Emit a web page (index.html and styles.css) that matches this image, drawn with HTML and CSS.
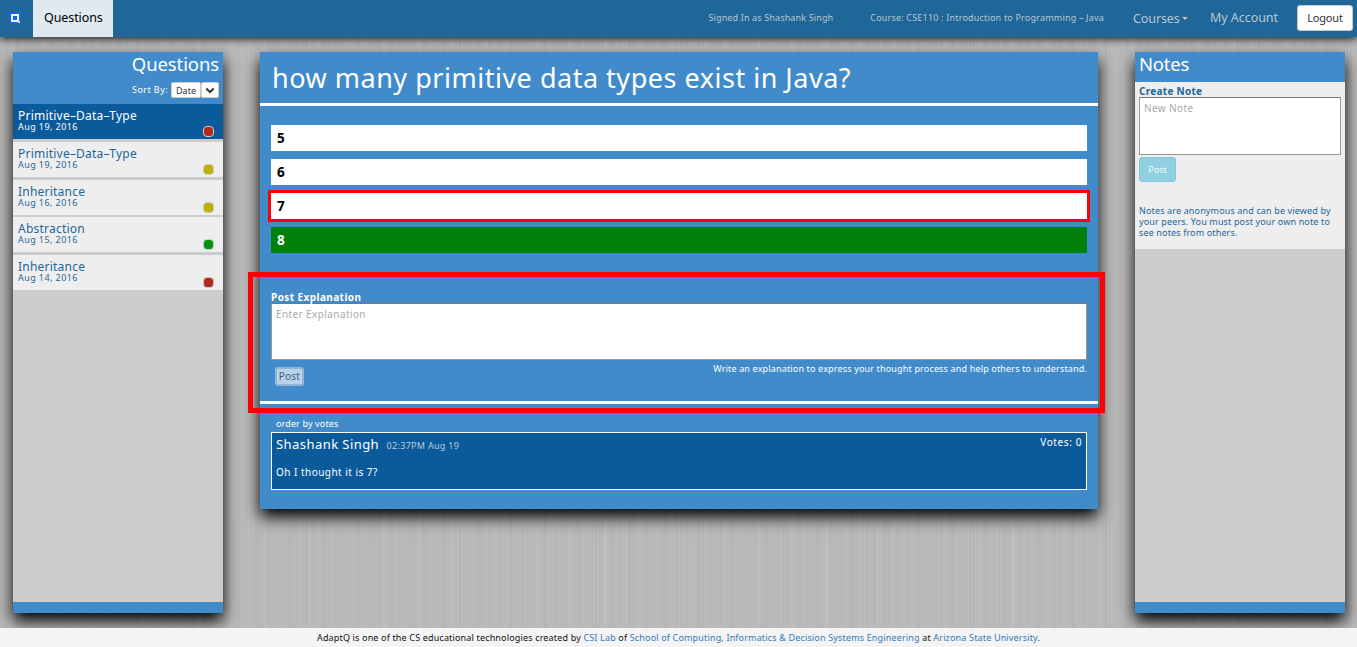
FILE: index.html
```
<!DOCTYPE html>
<html lang="en">
<head>
<meta charset="utf-8">
<title>AdaptQ</title>
<link rel="stylesheet" href="styles.css">
</head>
<body>
<nav class="navbar">
  <a class="brand"><svg width="12" height="12" viewBox="0 0 12 12"><rect width="12" height="12" fill="#1763ee"/><rect x="3" y="3" width="6" height="6" fill="none" stroke="#fff" stroke-width="1.900"/><rect x="9" y="9" width="2" height="2" fill="#cfe0ff"/></svg></a>
  <a class="tab">Questions</a>
  <div class="nav-right">
    <span class="signed">Signed In as Shashank Singh</span>
    <span class="course">Course: CSE110 : Introduction to Programming – Java</span>
    <span class="courses">Courses<i class="caret"></i></span>
    <span class="account">My Account</span>
    <button class="logout">Logout</button>
  </div>
</nav>
<main class="page">
  <aside class="panel side">
    <header class="side-head">
      <h2>Questions</h2>
      <div class="sort"><span class="sort-label">Sort By:</span><span class="select"><b>Date</b><b class="arrow"><svg width="10" height="7" viewBox="0 0 10 7"><path d="M1.300 1.500 5 5l3.700-3.500" fill="none" stroke="#333" stroke-width="2"/></svg></b></span></div>
    </header>
    <ul class="list">
      <li class="active"><span class="name">Primitive–Data–Type</span><span class="date">Aug 19, 2016</span><i class="dot red"></i></li>
      <li><span class="name">Primitive–Data–Type</span><span class="date">Aug 19, 2016</span><i class="dot yellow"></i></li>
      <li><span class="name">Inheritance</span><span class="date">Aug 16, 2016</span><i class="dot yellow"></i></li>
      <li><span class="name">Abstraction</span><span class="date">Aug 15, 2016</span><i class="dot green"></i></li>
      <li><span class="name">Inheritance</span><span class="date">Aug 14, 2016</span><i class="dot red"></i></li>
    </ul>
    <div class="side-foot"></div>
  </aside>
  <section class="panel main">
    <h1>how many primitive data types exist in Java?</h1>
    <ol class="answers">
      <li>5</li>
      <li>6</li>
      <li class="chosen">7</li>
      <li class="correct">8</li>
    </ol>
    <div class="explain">
      <label>Post Explanation</label>
      <div class="field">Enter Explanation</div>
      <div class="explain-row"><button class="post">Post</button><span class="hint">Write an explanation to express your thought process and help others to understand.</span></div>
      <div class="marker"></div>
    </div>
    <div class="comments">
      <span class="order">order by votes</span>
      <article class="comment">
        <div class="comment-head"><span class="author">Shashank Singh</span><span class="time">02:37PM Aug 19</span><span class="votes">Votes: 0</span></div>
        <p>Oh I thought it is 7?</p>
      </article>
    </div>
  </section>
  <aside class="panel side">
    <h2 class="notes-head">Notes</h2>
    <div class="notes">
      <label>Create Note</label>
      <div class="field">New Note</div>
      <button class="note-post">Post</button>
      <p>Notes are anonymous and can be viewed by<br>your peers. You must post your own note to<br>see notes from others.</p>
    </div>
    <div class="side-foot"></div>
  </aside>
</main>
<footer class="footer">AdaptQ is one of the CS educational technologies created by <a>CSI Lab</a> of <a>School of Computing, Informatics &amp; Decision Systems Engineering</a> at <a>Arizona State University</a>.</footer>
</body>
</html>
```
FILE: styles.css
```
* { box-sizing: border-box; }
body {
  margin: 0;
  width: 1357px;
  height: 647px;
  overflow: hidden;
  display: flex;
  flex-direction: column;
  font-family: "Noto Sans", sans-serif;
  font-size: 10px;
  color: #fff;
  background-color: #b9b9b9;
  background-image:
    repeating-linear-gradient(90deg, rgba(255,255,255,.045) 0 1px, transparent 1px 5px, rgba(0,0,0,.02) 5px 6px, transparent 6px 11px),
    repeating-linear-gradient(90deg, rgba(0,0,0,.015) 0 2px, transparent 2px 9px, rgba(255,255,255,.03) 9px 12px, transparent 12px 17px),
    repeating-linear-gradient(90deg, rgba(0,0,0,.02) 0 1px, transparent 1px 13px, rgba(255,255,255,.07) 13px 14px, transparent 14px 37px);
}
h1, h2, ul, ol, p { margin: 0; padding: 0; font-weight: 400; list-style: none; }
span { white-space: nowrap; }
button { font-family: inherit; padding: 0; }

.navbar {
  flex: none;
  height: 37px;
  display: flex;
  background: #1f6699;
  box-shadow: 0 2px 8px rgba(0,0,0,.85);
}
.brand { width: 33px; padding: 12px 0 0 9px; line-height: 0; }
.tab { width: 80px; background: #dfe9ef; color: #000; font-size: 12.5px; line-height: 35px; padding-left: 11px; letter-spacing: -.1px; }
.nav-right { margin-left: auto; display: flex; color: #b9c6d0; line-height: 35px; padding-right: 4px; }
.signed, .course { font-size: 9px; }
.signed { margin-right: 37px; letter-spacing: .14px; }
.course { margin-right: 29px; letter-spacing: .19px; }
.courses, .account { font-size: 12.5px; }
.courses { display: flex; align-items: center; width: 55px; margin-right: 22px; letter-spacing: -.1px; }
.caret { border: 3px solid transparent; border-top-color: #b9c6d0; border-bottom: 0; margin-left: 2px; }
.account { margin-right: 19px; letter-spacing: -.05px; }
.logout { width: 56px; height: 26px; margin-top: 5px; background: #fff; border: 1px solid #ccc; border-radius: 3px; color: #333; font-size: 11px; line-height: 24px; letter-spacing: -.2px; }

.page { flex: 1; display: flex; justify-content: space-between; align-items: flex-start; padding: 15px 12px 0 13px; }
.panel { box-shadow: 0 8px 15px #000; }
.side { width: 210px; height: 561px; background: #ccc; display: flex; flex-direction: column; }
.side-foot { height: 11px; background: #428bca; margin-top: auto; }
.side-head { height: 52px; background: #428bca; padding-right: 4px; display: flex; flex-direction: column; align-items: flex-end; }
.side h2 { font-size: 18.5px; line-height: 24px; letter-spacing: -.1px; }
.sort { display: flex; margin-top: 6px; line-height: 16px; font-size: 9px; }
.sort-label { margin-right: 3px; letter-spacing: .43px; }
.select { display: flex; }
.select b { height: 16px; width: 30px; background: #fff; border: 1px solid #ccc; border-radius: 2px; color: #333; font-weight: 400; text-align: center; line-height: 15px; }
.select .arrow { width: 18px; }
.list { color: #1f6699; }
.list li { height: 35px; margin-bottom: 2.75px; background: #eee; padding: 5px; display: flex; flex-direction: column; align-items: flex-start; position: relative; }
.list .active { background: #0b5a9c; color: #fff; }
.name { font-size: 12px; line-height: 13px; letter-spacing: .22px; }
.date { font-size: 9px; line-height: 10px; letter-spacing: .42px; }
.dot { position: absolute; right: 9px; bottom: 2px; width: 11px; height: 11px; border-radius: 4px; border: 1px solid #ccc; }
.red { background: #b2281c; }
.yellow { background: #bdb000; }
.green { background: #00940e; }

.main { width: 838px; height: 457px; background: #428bca; }
h1 { height: 54px; border-bottom: 3px solid #fff; padding-left: 12px; font-size: 27px; line-height: 51px; letter-spacing: .51px; }
.answers { padding: 19px 11px; display: flex; flex-direction: column; gap: 8px; height: 166px; }
.answers li { height: 26px; background: #fff; color: #000; font-weight: 700; font-size: 13.5px; line-height: 26px; padding-left: 6px; }
.answers .chosen { box-shadow: 0 0 0 3px red; }
.answers .correct { background: #008009; color: #fff; }
.explain { height: 132px; border-bottom: 3px solid #fff; padding: 18px 11px 0; position: relative; }
.explain label, .notes label { display: block; height: 13px; line-height: 14px; font-size: 10px; font-weight: 700; letter-spacing: .42px; }
.field { background: #fff; border: 1px solid #999; border-top-color: #777; color: #aaa; font-size: 10px; line-height: 20px; padding-left: 4px; letter-spacing: .4px; }
.explain .field { height: 57px; }
.explain-row { display: flex; justify-content: space-between; }
.post { width: 29px; height: 19px; margin: 7px 0 0 4px; background: #b9d3ea; border: 2px solid #93b5d5; border-radius: 3px; color: #3f5e7a; font-size: 10px; line-height: 15px; letter-spacing: .2px; }
.hint { font-size: 9px; line-height: 18px; letter-spacing: .16px; }
.marker { position: absolute; left: -12px; top: 0; width: 857px; height: 141px; border: 5px solid red; }
.comments { padding: 12px 11px; }
.order { display: block; width: max-content; margin-left: 5px; font-size: 9px; line-height: 16px; letter-spacing: .13px; }
.comment { height: 58px; background: #0b5a9c; border: 1px solid #fff; padding: 0 4px; }
.comment-head { display: flex; align-items: baseline; height: 33px; line-height: 22px; }
.author { font-size: 13px; letter-spacing: .44px; }
.time { font-size: 9px; color: #bfcbd5; margin-left: 7.5px; letter-spacing: .3px; }
.votes { margin-left: auto; align-self: flex-start; line-height: 18px; font-size: 10px; letter-spacing: .6px; }
.comment p { font-size: 10px; line-height: 13px; letter-spacing: .47px; }

.side .notes-head { height: 30px; background: #428bca; padding-left: 4px; letter-spacing: -.2px; }
.notes { height: 167px; background: #eee; color: #1f6699; padding: 2px 4px 0; }
.notes .field { height: 58px; }
.notes label { letter-spacing: .28px; }
.note-post { display: block; width: 37px; height: 25px; margin-top: 2px; background: #90d0e3; border: 1px solid #7ec8df; border-radius: 3px; color: #f3fafc; font-size: 9px; }
.notes p { margin-top: 23px; font-size: 9px; line-height: 11px; white-space: nowrap; letter-spacing: .14px; }
.footer { flex: none; height: 19px; background: #f4f4f4; color: #111; text-align: center; font-size: 9px; line-height: 20px; position: relative; letter-spacing: .16px; }
.footer a { color: #337ab7; }
```
